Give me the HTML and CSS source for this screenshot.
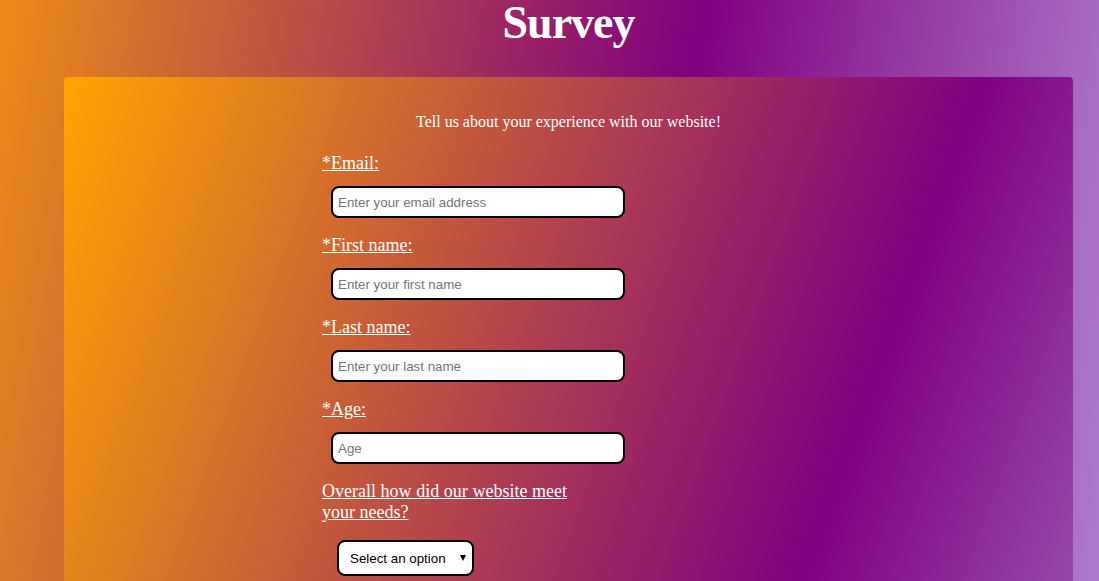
FILE: index.html
```html
<!DOCTYPE html>
<html lang="en">
<head>
<meta charset="utf-8">
<title>Survey</title>
<link rel="stylesheet" href="styles.css">
</head>
<body>
<div class="page">
  <h1 class="title">Survey</h1>
  <main class="card">
    <p class="intro">Tell us about your experience with our website!</p>
    <form class="form">
      <label class="label" for="email">*Email:</label>
      <input class="field" id="email" type="email" placeholder="Enter your email address">
      <label class="label" for="first">*First name:</label>
      <input class="field" id="first" type="text" placeholder="Enter your first name">
      <label class="label" for="last">*Last name:</label>
      <input class="field" id="last" type="text" placeholder="Enter your last name">
      <label class="label" for="age">*Age:</label>
      <input class="field" id="age" type="number" placeholder="Age">
      <label class="label label-wide" for="needs">Overall how did our website meet your needs?</label>
      <span class="select-wrap">
        <select class="select" id="needs">
          <option>Select an option</option>
          <option>Exceeded</option>
          <option>Met</option>
          <option>Did not meet</option>
        </select>
      </span>
    </form>
  </main>
</div>
</body>
</html>
```

FILE: styles.css
```css
html, body {
  margin: 0;
  padding: 0;
}

body {
  font-family: "Liberation Serif", "Times New Roman", serif;
  color: #ffffff;
  background-image: linear-gradient(100deg, #ec8b18 0px, #800080 694px, #a76bc2 1086px, #ad78cc 1183px);
  background-attachment: fixed;
  min-height: 100vh;
}

.page {
  margin: 0 26px 0 64px;
}

.title {
  margin: 0 0 32px;
  font-size: 46px;
  line-height: 45px;
  font-weight: bold;
  text-align: center;
  letter-spacing: -1px;
}

.card {
  display: block;
  border-radius: 4px;
  padding: 36px 0 160px;
  background-image: linear-gradient(110deg, #ffa500 0px, #800080 861px, #9b59b6 1183px);
}

.intro {
  margin: 0 0 22px;
  font-size: 16px;
  line-height: 18px;
  text-align: center;
}

.form {
  width: 493px;
  margin: 0 auto;
  display: flex;
  flex-direction: column;
  align-items: flex-start;
}

.label {
  display: block;
  font-size: 18px;
  line-height: 21px;
  text-decoration: underline;
  margin: 0 0 12px;
}

.label-wide {
  width: 245px;
  text-align: justify;
  margin-bottom: 17px;
}

.field {
  box-sizing: border-box;
  width: 294px;
  height: 32px;
  margin: 0 0 17px 9px;
  padding: 0 5px;
  border: 2px solid #000000;
  border-radius: 8px;
  background: #ffffff;
  font-family: "Liberation Sans", Arial, sans-serif;
  font-size: 13.333px;
  color: #000000;
  outline: none;
}

.field::placeholder {
  color: #757575;
}

.select-wrap {
  position: relative;
  display: block;
  margin-left: 15px;
}

.select {
  box-sizing: border-box;
  width: 137px;
  height: 36px;
  padding: 0 20px 0 11px;
  border: 2px solid #000000;
  border-radius: 8px;
  background: #ffffff;
  font-family: "Liberation Sans", Arial, sans-serif;
  font-size: 13.333px;
  color: #000000;
  -webkit-appearance: none;
  appearance: none;
  outline: none;
}

.select-wrap::after {
  content: "";
  position: absolute;
  left: 123px;
  top: 15px;
  width: 0;
  height: 0;
  border-left: 3px solid transparent;
  border-right: 3px solid transparent;
  border-top: 6px solid #000000;
  pointer-events: none;
}
```
